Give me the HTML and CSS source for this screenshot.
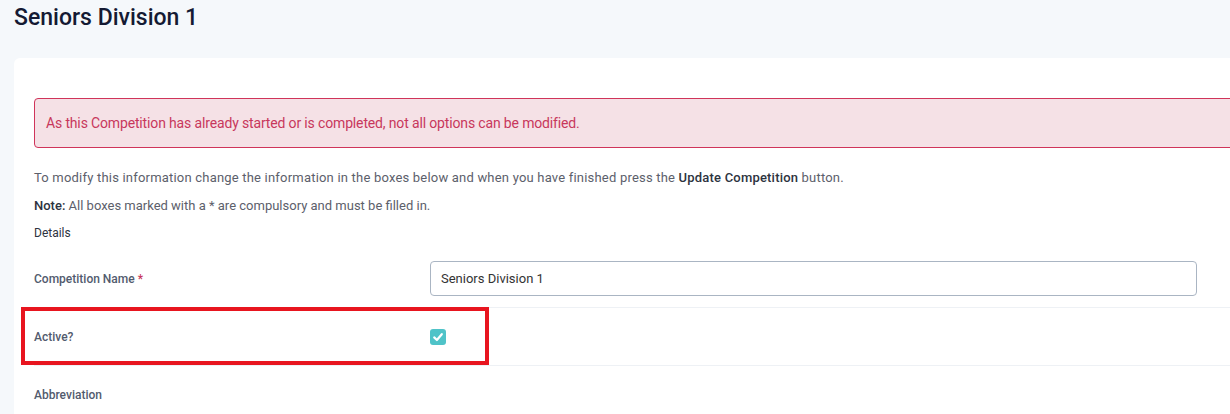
FILE: index.html
```html
<!DOCTYPE html>
<html lang="en">
<head>
<meta charset="utf-8">
<title>Seniors Division 1</title>
<link rel="stylesheet" href="styles.css">
</head>
<body>
<div class="page">
  <h1 class="title">Seniors Division 1</h1>
  <div class="card">
    <div class="alert">As this Competition has already started or is completed, not all options can be modified.</div>
    <p class="intro">To modify this information change the information in the boxes below and when you have finished press the <strong>Update Competition</strong> button.</p>
    <p class="note"><strong>Note:</strong> All boxes marked with a * are compulsory and must be filled in.</p>
    <div class="section">Details</div>
    <div class="form">
      <div class="row">
        <label class="label" for="compName">Competition Name <span class="req">*</span></label>
        <div class="field"><input id="compName" class="input" type="text" value="Seniors Division 1"></div>
      </div>
      <div class="row row-active">
        <label class="label" for="active">Active?</label>
        <div class="field">
          <span class="check" id="active">
            <svg viewBox="0 0 16 16" width="16" height="16"><path d="M4.2 8.4 L6.9 11 L11.8 5.2" fill="none" stroke="#fff" stroke-width="2.2" stroke-linecap="round" stroke-linejoin="round"/></svg>
          </span>
        </div>
        <div class="highlight"></div>
      </div>
      <div class="row">
        <label class="label">Abbreviation</label>
        <div class="field"></div>
      </div>
    </div>
  </div>
</div>
</body>
</html>
```

FILE: styles.css
```css
html, body {
  margin: 0;
  padding: 0;
  background: #f5f8fb;
  overflow: hidden;
}
body {
  font-family: Roboto, "Liberation Sans", sans-serif;
  color: #333;
}
.page {
  padding: 3px 0 0 14px;
}
.title {
  margin: 0 0 25px;
  font-size: 23px;
  line-height: 30px;
  font-weight: 500;
  color: #141a33;
}
.card {
  width: 1260px;
  background: #fff;
  border-radius: 6px 0 0 6px;
  padding: 40px 0 0 20px;
  min-height: 400px;
}
.alert {
  background: #f5e1e6;
  border: 1px solid #d0345a;
  border-radius: 4px;
  color: #c8375c;
  font-size: 14px;
  letter-spacing: -0.15px;
  height: 48px;
  line-height: 48px;
  padding: 0 11px;
}
.intro, .note {
  margin: 0;
  font-size: 13px;
  color: #5c606b;
}
.intro {
  margin-top: 21px;
  line-height: 18px;
  letter-spacing: 0.2px;
}
.note {
  margin-top: 10px;
  line-height: 18px;
}
.intro strong, .note strong {
  color: #2d3340;
  font-weight: 500;
}
.section {
  margin-top: 9px;
  font-size: 12px;
  line-height: 18px;
  color: #2d3340;
}
.form {
  margin-top: 8px;
}
.row {
  position: relative;
  display: grid;
  grid-template-columns: 396px 767px;
  align-items: center;
  min-height: 57px;
  border-bottom: 1px solid #eef1f5;
}
.label {
  font-size: 12px;
  font-weight: 500;
  color: #525b6e;
}
.req {
  color: #c8375c;
}
.input {
  box-sizing: border-box;
  width: 767px;
  height: 35px;
  border: 1px solid #aab5c3;
  border-radius: 4px;
  padding: 0 10px;
  font-family: inherit;
  font-size: 13px;
  color: #333;
  outline: none;
}
.check {
  display: flex;
  width: 16px;
  height: 16px;
  border-radius: 3px;
  background: #4fc3c8;
}
.highlight {
  position: absolute;
  left: -13px;
  top: -1px;
  width: 460px;
  height: 50px;
  border: 4px solid #e8151f;
  pointer-events: none;
}
```
